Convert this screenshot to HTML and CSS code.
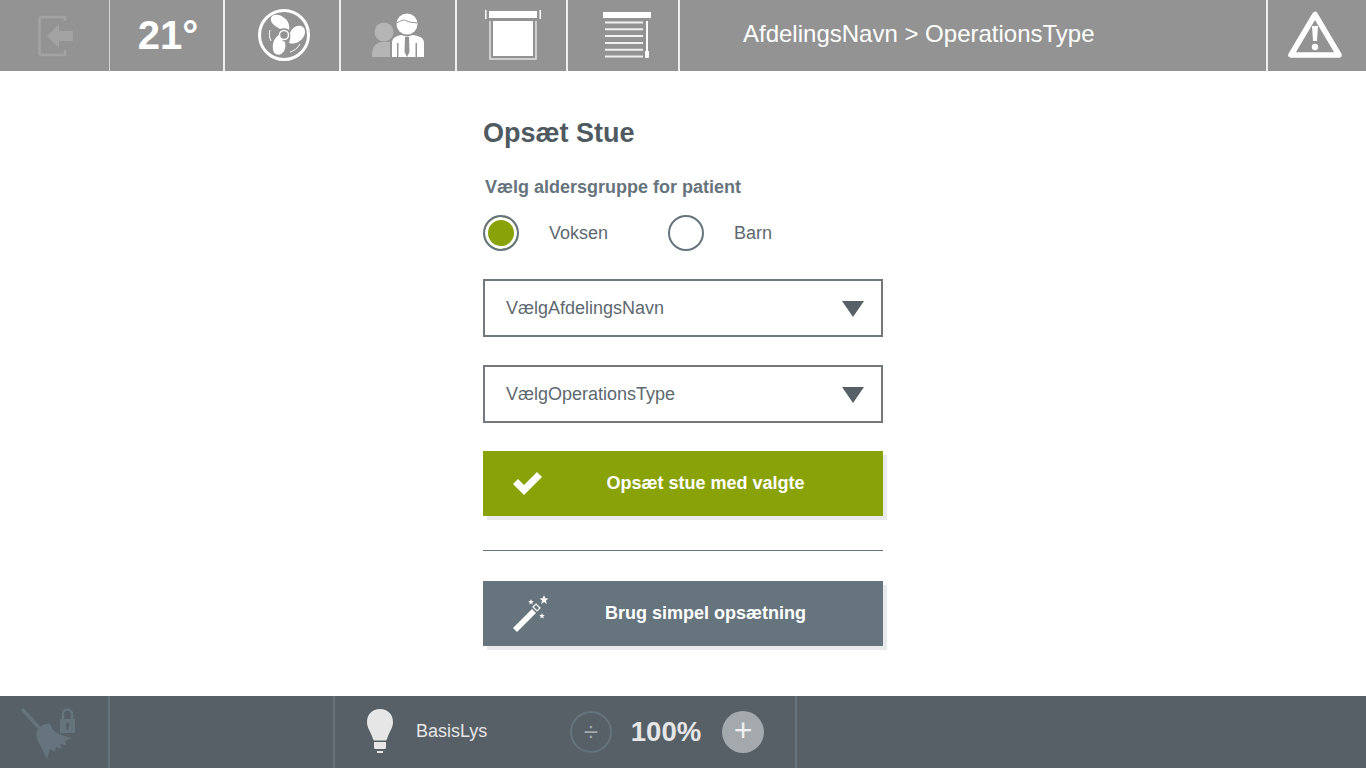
FILE: index.html
```html
<!DOCTYPE html>
<html lang="en">
<head>
    <meta charset="UTF-8">
    <meta name="viewport" content="width=device-width, initial-scale=1.0">
    <title>Opsæt Stue</title>
    <link rel="stylesheet" href="styles.css">
</head>
<body>
    <header class="topbar">
        <div class="cell cell-exit thin">
            <svg width="40" height="44" viewBox="0 0 40 44">
                <path d="M27 7V3H3a1.500 1.500 0 0 0-1.500 1.500v35A1.500 1.500 0 0 0 3 41h24v-5" fill="none" stroke="#a3a3a3" stroke-width="2.500"/>
                <path d="M9 22L21 10v7h14v10H21v7z" fill="#a3a3a3"/>
            </svg>
        </div>
        <div class="cell cell-temp">21°</div>
        <div class="cell cell-fan">
            <svg width="54" height="54" viewBox="0 0 54 54">
                <circle cx="27" cy="27" r="24.500" fill="none" stroke="#fff" stroke-width="3"/>
                <path d="M23 21C18 18 13 15 14 10c1-4 8-4 12-1 5 3 7 8 6 13-2-2-6-2-9-1z" fill="#fff"/>
                <path d="M33 25c2-5 6-8 11-7 4 1 5 6 3 10-3 6-10 9-15 7 1-3 2-7 1-10z" fill="#fff"/>
                <path d="M28 34c1 5 0 10-4 12-4 2-8-1-8-5-1-6 2-12 6-14 1 3 3 6 6 7z" fill="#fff"/>
                <circle cx="27" cy="27" r="4.500" fill="#939393" stroke="#fff" stroke-width="1.500"/>
                <path d="M14 33c-2-4-2-8-1-11M33 44c4-1 8-4 10-8" fill="none" stroke="#fff" stroke-width="1"/>
            </svg>
        </div>
        <div class="cell cell-people">
            <svg width="54" height="46" viewBox="0 0 54 46">
                <circle cx="12" cy="20" r="9.500" fill="#b5b5b5"/>
                <path d="M0 45c0-9 2-14 10-15h8v15z" fill="#b5b5b5"/>
                <circle cx="35" cy="12" r="10.500" fill="#fff"/>
                <path d="M25 11c3-2 7-4 10-2 3 2 6 1 10 2" fill="none" stroke="#939393" stroke-width="1"/>
                <path d="M20 45V31c0-5 4-7 9-8l6 1.500 6-1.500c7 1 11 3 11 8v14h-7V31h-1.500v14h-17V31H25v14z" fill="#fff"/>
                <path d="M33 25h4l.5 15-2.500 5-2.500-5z" fill="#939393"/>
            </svg>
        </div>
        <div class="cell cell-blind">
            <svg width="56" height="50" viewBox="0 0 56 50">
                <path d="M0 0h1.500v9H0zM54.500 0H56v9h-1.500zM4 1h48v7H4z" fill="#fff"/>
                <path d="M5 11v38h46V11" fill="none" stroke="#e4e4e4" stroke-width="1.500"/>
                <path d="M8 11h40v35H8z" fill="#fff"/>
            </svg>
        </div>
        <div class="cell cell-slats">
            <svg width="48" height="47" viewBox="0 0 48 47">
                <path d="M0 0h48v6H0z" fill="#fff"/>
                <path d="M2 9.500h38v2H2zM2 16.300h38v2H2zM2 23.100h38v2H2zM2 29.900h38v2H2zM2 36.700h38v2H2zM2 43.500h38v2H2z" fill="#f0f0f0"/>
                <path d="M43 9h2v30h1v6a1 1 0 0 1-1 1h-2a1 1 0 0 1-1-1v-6h1z" fill="#fff"/>
            </svg>
        </div>
        <div class="cell cell-title">AfdelingsNavn &gt; OperationsType</div>
        <div class="cell-alert">
            <svg width="54" height="48" viewBox="0 0 54 48">
                <path d="M27 3.500L3 44h48z" fill="none" stroke="#fff" stroke-width="5.500" stroke-linejoin="round"/>
                <path d="M24 15h6l-1 15h-4z" fill="#fff"/>
                <circle cx="27" cy="36" r="3.200" fill="#fff"/>
            </svg>
        </div>
    </header>

    <main class="content">
        <div class="setup">
            <h1>Opsæt Stue</h1>
            <p class="group-label">Vælg aldersgruppe for patient</p>
            <div class="radios">
                <div class="radio-item first">
                    <span class="radio checked"></span>
                    <span>Voksen</span>
                </div>
                <div class="radio-item">
                    <span class="radio"></span>
                    <span>Barn</span>
                </div>
            </div>
            <div class="select">
                <span>VælgAfdelingsNavn</span>
                <span class="caret"></span>
            </div>
            <div class="select">
                <span>VælgOperationsType</span>
                <span class="caret"></span>
            </div>
            <div class="action green">
                <svg class="action-icon" width="32" height="26" viewBox="0 0 32 26">
                    <path d="M1 13l5-5 6 6L25 1l5 5-18 18z" fill="#fff"/>
                </svg>
                <span>Opsæt stue med valgte</span>
            </div>
            <hr class="rule">
            <div class="action slate">
                <svg class="action-icon" width="38" height="40" viewBox="0 0 38 40">
                    <path d="M1 34L20 15l4 4L5 38z" fill="#fff"/>
                    <path d="M21 13l3-3 4 4-3 3z" fill="none" stroke="#fff" stroke-width="1.200"/>
                    <path d="M32 1l1.200 3.300 3.300.2-2.600 2.100.9 3.400-2.800-1.900-2.800 1.900.9-3.400-2.600-2.100 3.300-.2z" fill="#fff"/>
                    <path d="M19 5l.8 2h2.100l-1.700 1.300.6 2.100-1.800-1.200-1.800 1.200.6-2.100-1.700-1.300h2.100z" fill="#fff"/>
                    <path d="M30 19l.8 2h2.100l-1.700 1.300.6 2.100-1.800-1.200-1.800 1.200.6-2.100-1.700-1.300h2.100z" fill="#fff"/>
                </svg>
                <span>Brug simpel opsætning</span>
            </div>
        </div>
    </main>

    <footer class="bottombar">
        <div class="foot-clean">
            <svg width="56" height="52" viewBox="0 0 56 52">
                <path d="M2 3l19 21" stroke="#66747d" stroke-width="3.500" stroke-linecap="round"/>
                <path d="M17 24c2-5 7-8 12-7l3 6c5 4 12 7 19 8l-7 3 1 4-6-1 2 5-6-2-1 5-5-3-3 10-10-20c-1-4-1-6 0-9z" fill="#66747d"/>
                <path d="M42 12V7a4.500 4.500 0 0 1 9 0v5" fill="none" stroke="#66747d" stroke-width="2.500"/>
                <path d="M39 12h15v14H39z" fill="#66747d"/>
                <circle cx="46.500" cy="17.500" r="2" fill="#566066"/>
                <path d="M45.500 18h2v4.500h-2z" fill="#566066"/>
            </svg>
        </div>
        <div class="foot-gap"></div>
        <div class="foot-light">
            <svg class="bulb" width="28" height="46" viewBox="0 0 28 46">
                <path d="M14 0C6 0 1 5.500 1 13c0 6 3.500 9 6 17 .3 1 1 1.500 2 1.500h10c1 0 1.700-.5 2-1.500 2.500-8 6-11 6-17C27 5.500 22 0 14 0z" fill="#e6e6e6"/>
                <path d="M8 33h12v5.500a1.500 1.500 0 0 1-1.500 1.500h-9A1.500 1.500 0 0 1 8 38.500z" fill="#e6e6e6"/>
                <path d="M11 42h6v2h-6z" fill="#e6e6e6"/>
            </svg>
            <span class="light-name">BasisLys</span>
            <span class="round minus">÷</span>
            <span class="percent">100%</span>
            <span class="round plus">+</span>
        </div>
    </footer>
</body>
</html>
```

FILE: styles.css
```css
html, body {
    margin: 0;
    padding: 0;
    height: 768px;
    overflow: hidden;
}

body {
    display: flex;
    flex-direction: column;
    font-family: "Liberation Sans", Arial, sans-serif;
    background: #fff;
    color: #566066;
}

.topbar {
    display: flex;
    height: 71px;
    background: #939393;
    color: #fff;
}

.cell {
    display: flex;
    align-items: center;
    justify-content: center;
    box-sizing: border-box;
    border-right: 2px solid #eeeeee;
}

.cell.thin {
    border-right: 1px solid #d4d4d4;
}

.cell-exit { width: 110px; padding-left: 7px; }
.cell-temp { width: 115px; padding: 0 0 1px 3px; font-size: 40px; font-weight: bold; }
.cell-fan { width: 116px; padding: 0 0 1px 4px; }
.cell-people { width: 116px; padding: 0 0 2px 1px; }
.cell-blind { width: 111px; padding: 0 0 1px 2px; }
.cell-slats { width: 112px; padding-left: 7px; }

.cell-title {
    width: 588px;
    justify-content: flex-start;
    padding: 0 0 3px 63px;
    font-size: 24px;
}

.cell-alert {
    flex: 1;
    display: flex;
    align-items: center;
    justify-content: center;
    padding: 0 4px 2px 0;
}

.content {
    flex: 1;
    display: flex;
    justify-content: center;
}

.setup {
    width: 400px;
    padding-top: 45px;
}

.setup h1 {
    margin: 0;
    font-size: 27px;
    line-height: 34px;
    color: #4f5a60;
}

.group-label {
    margin: 27px 0 0 2px;
    font-size: 18px;
    line-height: 20px;
    font-weight: bold;
    color: #66747d;
}

.radios {
    display: flex;
    margin-top: 18px;
}

.radio-item {
    display: flex;
    align-items: center;
    gap: 30px;
    font-size: 18px;
    color: #5d686f;
}

.radio-item.first {
    width: 185px;
}

.radio {
    box-sizing: border-box;
    width: 36px;
    height: 36px;
    border: 2px solid #66747d;
    border-radius: 50%;
    background: #fff;
}

.radio.checked {
    background: #89a208;
    box-shadow: inset 0 0 0 3px #fff;
}

.select {
    display: flex;
    align-items: center;
    justify-content: space-between;
    box-sizing: border-box;
    height: 58px;
    margin-top: 28px;
    padding: 0 17px 0 21px;
    border: 2px solid #73787c;
    font-size: 18px;
    color: #5d686f;
}

.caret {
    width: 0;
    height: 0;
    margin-top: 2px;
    border-left: 11px solid transparent;
    border-right: 11px solid transparent;
    border-top: 16px solid #566066;
}

.action {
    position: relative;
    display: flex;
    align-items: center;
    justify-content: center;
    height: 65px;
    padding-left: 45px;
    font-size: 18px;
    font-weight: bold;
    color: #fff;
    box-shadow: 4px 4px 0 #e8eaeb;
}

.action span {
    padding-bottom: 1px;
}

.action.green {
    margin-top: 28px;
    background: #89a208;
}

.action.slate {
    background: #66747d;
}

.action-icon {
    position: absolute;
    left: 29px;
    top: 20px;
}

.action.slate .action-icon {
    top: 13px;
}

.rule {
    height: 1px;
    margin: 34px 0 30px;
    border: 0;
    background: #66747d;
}

.bottombar {
    display: flex;
    height: 72px;
    background: #566066;
}

.foot-clean {
    box-sizing: border-box;
    width: 110px;
    padding: 11px 0 0 21px;
    border-right: 2px solid #66747d;
}

.foot-gap {
    box-sizing: border-box;
    width: 225px;
    border-right: 2px solid #66747d;
}

.foot-light {
    display: flex;
    align-items: center;
    box-sizing: border-box;
    width: 462px;
    padding-left: 31px;
    border-right: 2px solid #66747d;
    color: #e6e6e6;
}

.bulb {
    flex: none;
}

.light-name {
    width: 154px;
    margin-left: 22px;
    font-size: 18px;
    padding-bottom: 2px;
}

.round {
    display: flex;
    align-items: center;
    justify-content: center;
    box-sizing: border-box;
    width: 42px;
    height: 42px;
    border-radius: 50%;
    font-size: 26px;
}

.round.minus {
    border: 2px solid #66747d;
    color: #a3a9ac;
}

.round.plus {
    background: #a3a9ac;
    color: #f0f0f0;
    font-size: 32px;
    padding-bottom: 3px;
}

.percent {
    width: 110px;
    padding: 0 2px 1px 0;
    box-sizing: border-box;
    text-align: center;
    font-size: 27.500px;
    font-weight: bold;
}
```
